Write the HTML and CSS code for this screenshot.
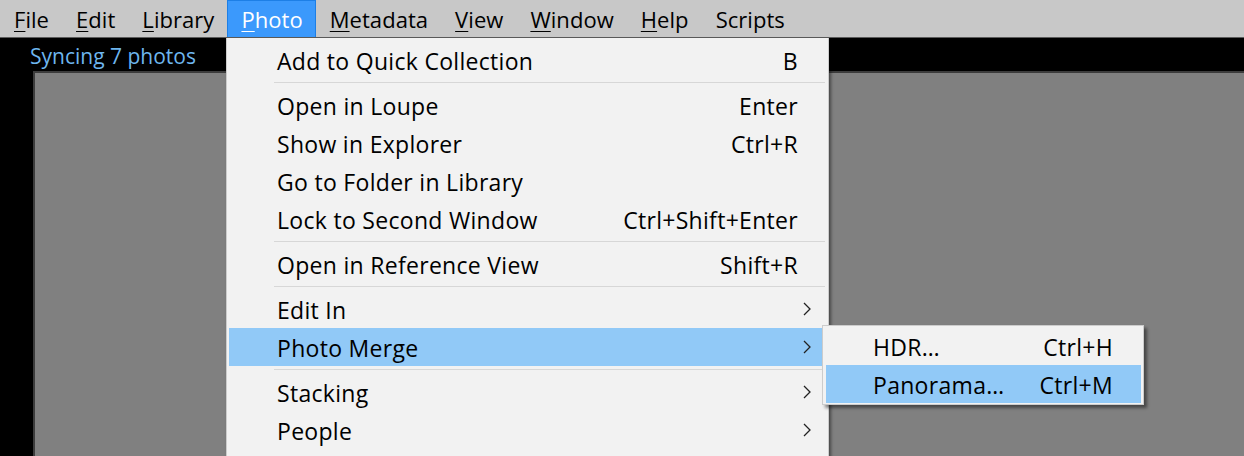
FILE: index.html
```html
<!DOCTYPE html>
<html>
<head>
<meta charset="utf-8">
<link rel="stylesheet" href="styles.css">
</head>
<body>
<div class="app">
  <nav class="menubar">
    <span class="top-item"><u>F</u>ile</span>
    <span class="top-item"><u>E</u>dit</span>
    <span class="top-item"><u>L</u>ibrary</span>
    <span class="top-item active"><u>P</u>hoto</span>
    <span class="top-item"><u>M</u>etadata</span>
    <span class="top-item"><u>V</u>iew</span>
    <span class="top-item"><u>W</u>indow</span>
    <span class="top-item"><u>H</u>elp</span>
    <span class="top-item">Scripts</span>
  </nav>
  <main class="workspace">
    <div class="status">Syncing 7 photos</div>
    <div class="canvas-wrap"><div class="canvas"></div></div>
  </main>

  <div class="menu photo-menu">
    <div class="item"><span class="label">Add to Quick Collection</span><span class="key">B</span></div>
    <div class="sep"></div>
    <div class="item"><span class="label">Open in Loupe</span><span class="key">Enter</span></div>
    <div class="item"><span class="label">Show in Explorer</span><span class="key">Ctrl+R</span></div>
    <div class="item"><span class="label">Go to Folder in Library</span><span class="key"></span></div>
    <div class="item"><span class="label">Lock to Second Window</span><span class="key">Ctrl+Shift+Enter</span></div>
    <div class="sep"></div>
    <div class="item"><span class="label">Open in Reference View</span><span class="key">Shift+R</span></div>
    <div class="sep"></div>
    <div class="item sub"><span class="label">Edit In</span><svg class="chev" viewBox="0 0 8 14"><path d="M1 1 L7 7 L1 13" fill="none" stroke="#222" stroke-width="1.3"/></svg></div>
    <div class="item sub hl"><span class="label">Photo Merge</span><svg class="chev" viewBox="0 0 8 14"><path d="M1 1 L7 7 L1 13" fill="none" stroke="#222" stroke-width="1.3"/></svg></div>
    <div class="sep"></div>
    <div class="item sub"><span class="label">Stacking</span><svg class="chev" viewBox="0 0 8 14"><path d="M1 1 L7 7 L1 13" fill="none" stroke="#222" stroke-width="1.3"/></svg></div>
    <div class="item sub"><span class="label">People</span><svg class="chev" viewBox="0 0 8 14"><path d="M1 1 L7 7 L1 13" fill="none" stroke="#222" stroke-width="1.3"/></svg></div>
  </div>

  <div class="menu merge-menu">
    <div class="item"><span class="label">HDR…</span><span class="key">Ctrl+H</span></div>
    <div class="item hl"><span class="label">Panorama…</span><span class="key">Ctrl+M</span></div>
  </div>
</div>
</body>
</html>
```

FILE: styles.css
```css
html, body {
  margin: 0;
  padding: 0;
}

body {
  width: 1244px;
  height: 456px;
  overflow: hidden;
  background: #000;
  font-family: "Open Sans", "Noto Sans", sans-serif;
  color: #000;
}

.app {
  position: relative;
  width: 1244px;
  height: 456px;
  display: flex;
  flex-direction: column;
}

/* top menu bar */
.menubar {
  height: 38px;
  background: #c8c8c8;
  display: flex;
  align-items: stretch;
  border-bottom: 1px solid #5c5c5c;
  box-sizing: border-box;
  flex: none;
}

.top-item {
  display: flex;
  align-items: center;
  padding: 0 12px 0 13px;
  font-size: 22px;
  letter-spacing: 0.05px;
  border: 1px solid transparent;
  border-bottom: 0;
}

.top-item u {
  text-decoration-thickness: 1px;
  text-underline-offset: 3px;
}

.top-item.active {
  background: #3b99fc;
  border-color: #1d7fe6;
  color: #fff;
}

/* work area */
.workspace {
  flex: 1;
  display: flex;
  flex-direction: column;
  background: #000;
}

.status {
  height: 33px;
  padding: 3px 0 0 30px;
  color: #6eb6ee;
  font-size: 21px;
  line-height: 30px;
  box-sizing: border-box;
}

.canvas-wrap {
  flex: 1;
  padding-left: 33px;
  display: flex;
}

.canvas {
  flex: 1;
  background: #808080;
  border-top: 2px solid #3c3c3c;
  border-left: 2px solid #3c3c3c;
}

/* dropdown menus */
.menu {
  position: absolute;
  background: #f2f2f2;
  border: 1px solid #cccccc;
  box-sizing: border-box;
  font-size: 23px;
  letter-spacing: 0.3px;
}

.photo-menu {
  left: 226px;
  top: 38px;
  width: 603px;
  height: 430px;
  padding: 3px 3px 0 2px;
  border-top: 0;
  box-shadow: 2px 2px 3px rgba(0, 0, 0, 0.45);
}

.merge-menu {
  left: 822px;
  top: 325px;
  width: 322px;
  padding: 1px 2px 1px 3px;
  box-shadow: 3px 3px 3px rgba(0, 0, 0, 0.45);
}

.item {
  height: 38px;
  display: flex;
  align-items: center;
  justify-content: space-between;
  padding: 2px 27px 0 48px;
  box-sizing: border-box;
  white-space: nowrap;
}

.photo-menu .item.sub {
  padding-right: 14px;
}

.merge-menu .item {
  padding: 2px 28px 0 47px;
}

.item.hl {
  background: #91c9f7;
}

.chev {
  width: 8px;
  height: 14px;
  margin-top: -2px;
}

.sep {
  height: 1px;
  background: #d7d7d7;
  margin: 3px 0 3px 45px;
}
```
